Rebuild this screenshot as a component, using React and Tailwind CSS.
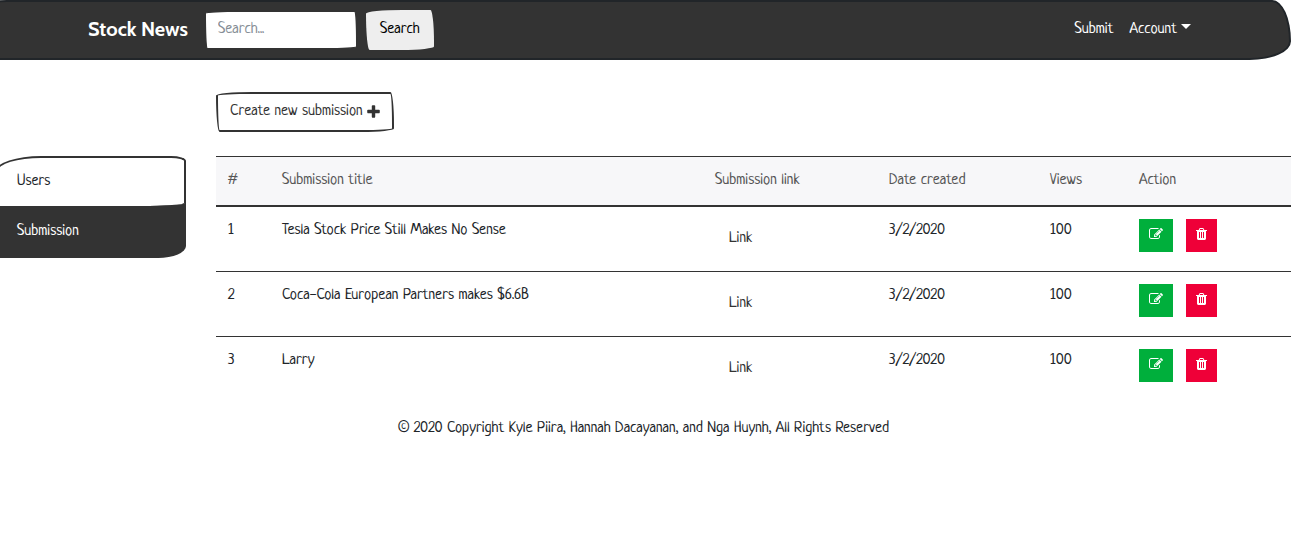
const submissions = [
  { id: 1, title: "Tesla Stock Price Still Makes No Sense", date: "3/2/2020", views: 100 },
  { id: 2, title: "Coca-Cola European Partners makes $6.6B", date: "3/2/2020", views: 100 },
  { id: 3, title: "Larry", date: "3/2/2020", views: 100 },
];

const sketchyButton = "rounded-[255px_25px_225px_25px/25px_225px_25px_255px]";

function PlusIcon() {
  return (
    <svg viewBox="192 0 1408 1792" className="h-4 w-[13px] fill-current" aria-hidden="true">
      <path d="M1600 736v192q0 40-28 68t-68 28h-416v416q0 40-28 68t-68 28h-192q-40 0-68-28t-28-68v-416h-416q-40 0-68-28t-28-68v-192q0-40 28-68t68-28h416v-416q0-40 28-68t68-28h192q40 0 68 28t28 68v416h416q40 0 68 28t28 68z" />
    </svg>
  );
}

function EditIcon() {
  return (
    <svg viewBox="0 0 1792 1792" className="size-3.5 fill-current" aria-hidden="true">
      <path d="M888 1184l116-116-152-152-116 116v56h96v96h56zm440-720q-16-16-33 1l-350 350q-17 17-1 33t33-1l350-350q17-17 1-33zm80 594v190q0 119-84.5 203.5t-203.5 84.5h-832q-119 0-203.5-84.5t-84.5-203.5v-832q0-119 84.5-203.5t203.5-84.5h832q63 0 117 25 15 7 18 23 3 17-9 29l-49 49q-14 14-32 8-23-6-45-6h-832q-66 0-113 47t-47 113v832q0 66 47 113t113 47h832q66 0 113-47t47-113v-126q0-13 9-22l64-64q15-15 35-7t20 29zm-96-738l288 288-672 672h-288v-288zm444 132l-92 92-288-288 92-92q28-28 68-28t68 28l152 152q28 28 28 68t-28 68z" />
    </svg>
  );
}

function TrashIcon() {
  return (
    <svg viewBox="192 0 1408 1792" className="h-3.5 w-[11px] fill-current" aria-hidden="true">
      <path d="M704 1376v-704q0-14-9-23t-23-9h-64q-14 0-23 9t-9 23v704q0 14 9 23t23 9h64q14 0 23-9t9-23zm256 0v-704q0-14-9-23t-23-9h-64q-14 0-23 9t-9 23v704q0 14 9 23t23 9h64q14 0 23-9t9-23zm256 0v-704q0-14-9-23t-23-9h-64q-14 0-23 9t-9 23v704q0 14 9 23t23 9h64q14 0 23-9t9-23zm-544-992h448l-48-117q-7-9-17-11h-317q-10 2-17 11zm928 32v64q0 14-9 23t-23 9h-96v948q0 83-47 143.5t-113 60.5h-832q-66 0-113-58.5t-47-141.5v-952h-96q-14 0-23-9t-9-23v-64q0-14 9-23t23-9h309l70-167q15-37 54-63t79-26h320q40 0 79 26t54 63l70 167h309q14 0 23 9t9 23z" />
    </svg>
  );
}

function Navbar() {
  return (
    <nav className="-ml-3 flex items-start rounded-[25px_25px_55px_5px/5px_55px_25px_25px] border-2 border-[#212529] bg-[#333] pt-2 pb-2 pr-[98px] pl-[98px] text-white">
      <a href="#" className="mr-4 pt-1 font-['Cabin','Lato',sans-serif] text-xl leading-[30px] font-bold">
        Stock News
      </a>
      <form className="flex items-center gap-2" onSubmit={(e) => e.preventDefault()}>
        <input
          type="search"
          aria-label="Search"
          placeholder="Search..."
          className="h-10 w-[154px] rounded-[255px_25px_225px_25px/25px_225px_25px_255px] border-2 border-[#333] bg-white px-3 text-[#333] outline-none placeholder:text-[#868e96]"
        />
        <button type="submit" className={`${sketchyButton} h-10 bg-[#eee] px-3.5 text-black`}>
          Search
        </button>
      </form>
      <div className="ml-auto flex gap-4 pt-2">
        <a href="#submit">Submit</a>
        <button type="button" className="flex gap-1">
          Account
          <span className="mt-1.5 border-x-[5px] border-t-[5px] border-x-transparent border-t-white" />
        </button>
      </div>
    </nav>
  );
}

function Sidebar() {
  return (
    <aside className="w-[216px] shrink-0 pt-16 pr-[30px]">
      <div className="-ml-1 flex flex-col rounded-[45px_15px_35px_5px/15px_5px_15px_65px] bg-linear-to-b from-transparent from-40% to-[#333] to-40%">
        <a
          href="#users"
          className="rounded-[45px_15px_45px_0px/15px_5px_3px_0px] border-2 border-b-0 border-[#333] bg-white px-[19px] py-3 text-[#212529]"
        >
          Users
        </a>
        <a
          href="#submission"
          aria-current="page"
          className="rounded-[0px_0px_35px_5px/0px_0px_15px_65px] border-2 border-[#333] bg-[#333] px-[19px] py-3 text-white"
        >
          Submission
        </a>
      </div>
    </aside>
  );
}

function SubmissionTable() {
  return (
    <table className="w-full table-fixed border-separate border-spacing-0 text-left text-[#212529]">
      <colgroup>
        <col className="w-[54px]" />
        <col />
        <col className="w-[174px]" />
        <col className="w-[161px]" />
        <col className="w-[89px]" />
        <col className="w-[164px]" />
      </colgroup>
      <thead>
        <tr className="h-[51px] bg-[#f7f7f9] align-top text-[#555]">
          {["#", "Submission title", "Submission link", "Date created", "Views", "Action"].map((label) => (
            <th key={label} scope="col" className="border-t border-b-2 border-[#333] px-3 pt-3 font-normal">
              {label}
            </th>
          ))}
        </tr>
      </thead>
      <tbody>
        {submissions.map((row) => (
          <tr
            key={row.id}
            className="h-[65px] align-top first:h-16 *:border-[#333] not-first:*:border-t"
          >
            <th scope="row" className="px-3 pt-3 font-normal">{row.id}</th>
            <td className="px-3 pt-3">{row.title}</td>
            <td className="px-3 pt-5">
              <a href={`#link-${row.id}`} className="px-3.5 text-[#333]">Link</a>
            </td>
            <td className="px-3 pt-3">{row.date}</td>
            <td className="px-3 pt-3">{row.views}</td>
            <td className="px-3 pt-3">
              <div className="flex gap-[13px]">
                <button type="button" aria-label="Edit" className="bg-[#00af3c] px-2.5 pt-2 pb-[11px] text-white">
                  <EditIcon />
                </button>
                <button type="button" aria-label="Delete" className="bg-[#ef0038] px-2.5 pt-2 pb-[11px] text-white">
                  <TrashIcon />
                </button>
              </div>
            </td>
          </tr>
        ))}
      </tbody>
    </table>
  );
}

export default function App() {
  return (
    <div className="overflow-x-hidden bg-white font-['Neucha','Lato',sans-serif] text-base">
      <Navbar />
      <div className="mt-8 flex">
        <Sidebar />
        <main className="min-w-0 flex-1">
          <button
            type="button"
            className={`${sketchyButton} mb-6 flex items-center gap-1 border-2 border-[#333] px-3 py-1.5 text-[#333]`}
          >
            Create new submission
            <PlusIcon />
          </button>
          <SubmissionTable />
        </main>
      </div>
      <footer className="mt-4 pr-1 text-center text-[#212529]">
        © 2020 Copyright Kyle Piira, Hannah Dacayanan, and Nga Huynh, All Rights Reserved
      </footer>
    </div>
  );
}
